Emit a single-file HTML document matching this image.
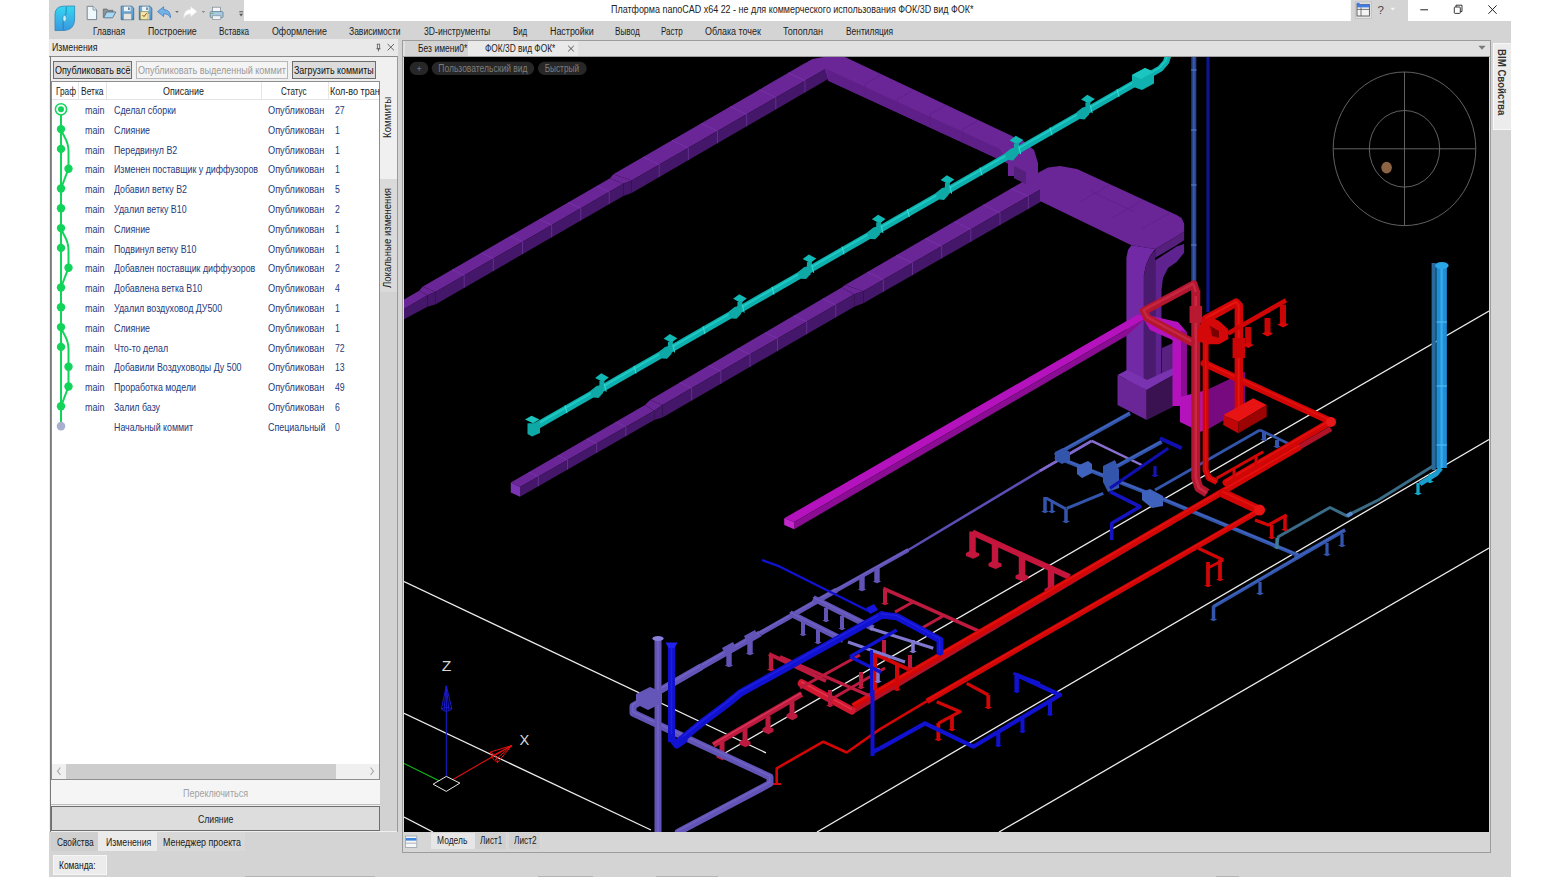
<!DOCTYPE html>
<html lang="ru"><head><meta charset="utf-8"><title>nanoCAD</title>
<style>
html,body{margin:0;padding:0;background:#fff}
body{width:1560px;height:877px;position:relative;overflow:hidden;font-family:"Liberation Sans",sans-serif}
body>div{position:absolute}
body>span{position:absolute;white-space:nowrap;line-height:1;transform-origin:0 0;display:block}
</style></head><body>
<div style="left:49px;top:0px;width:1462px;height:877px;background:#d4d4d4;"></div>
<div style="left:244px;top:0px;width:1107px;height:21px;background:#fff;"></div>
<div style="left:1408px;top:0px;width:103px;height:21px;background:#fff;"></div>
<span style="left:610.80px;top:4.94px;font-size:10px;color:#222;transform:scaleX(0.8946);">Платформа nanoCAD x64 22 - не для коммерческого использования ФОК/3D вид ФОК*</span>
<span style="left:92.50px;top:26.64px;font-size:10px;color:#1c1c1c;transform:scaleX(0.8408);">Главная</span>
<span style="left:147.50px;top:26.64px;font-size:10px;color:#1c1c1c;transform:scaleX(0.8746);">Построение</span>
<span style="left:218.70px;top:26.64px;font-size:10px;color:#1c1c1c;transform:scaleX(0.8099);">Вставка</span>
<span style="left:271.70px;top:26.64px;font-size:10px;color:#1c1c1c;transform:scaleX(0.8829);">Оформление</span>
<span style="left:348.70px;top:26.64px;font-size:10px;color:#1c1c1c;transform:scaleX(0.8503);">Зависимости</span>
<span style="left:424.20px;top:26.64px;font-size:10px;color:#1c1c1c;transform:scaleX(0.8626);">3D-инструменты</span>
<span style="left:513.30px;top:26.64px;font-size:10px;color:#1c1c1c;transform:scaleX(0.7849);">Вид</span>
<span style="left:549.70px;top:26.64px;font-size:10px;color:#1c1c1c;transform:scaleX(0.8892);">Настройки</span>
<span style="left:615.30px;top:26.64px;font-size:10px;color:#1c1c1c;transform:scaleX(0.8170);">Вывод</span>
<span style="left:661.30px;top:26.64px;font-size:10px;color:#1c1c1c;transform:scaleX(0.8025);">Растр</span>
<span style="left:705.00px;top:26.64px;font-size:10px;color:#1c1c1c;transform:scaleX(0.8951);">Облака точек</span>
<span style="left:783.30px;top:26.64px;font-size:10px;color:#1c1c1c;transform:scaleX(0.9050);">Топоплан</span>
<span style="left:846.30px;top:26.64px;font-size:10px;color:#1c1c1c;transform:scaleX(0.8408);">Вентиляция</span>
<div style="left:49px;top:39px;width:349px;height:17px;background:#e9e9e9;"></div>
<span style="left:52.00px;top:43.23px;font-size:10px;color:#1a1a1a;transform:scaleX(0.8781);">Изменения</span>
<div style="left:49px;top:56px;width:349px;height:776px;background:#f0f0f0;"></div>
<div style="left:49px;top:56px;width:349px;height:1px;background:#8a8a8a;"></div>
<div style="left:49.6px;top:56px;width:1px;height:776px;background:#7a7a7a;"></div>
<div style="left:397px;top:56px;width:1px;height:776px;background:#9a9a9a;"></div>
<div style="left:380px;top:57px;width:17px;height:774px;background:#d2d2d2;"></div>
<div style="left:380px;top:57px;width:17px;height:122px;background:#f0f0f0;"></div>
<div style="left:380px;top:179px;width:17px;height:113px;background:#dadada;"></div>
<span style="left:383.14px;top:138.20px;font-size:10px;color:#1a1a1a;transform:rotate(-90deg) scaleX(0.9697);">Коммиты</span>
<span style="left:383.14px;top:288.30px;font-size:10px;color:#1a1a1a;transform:rotate(-90deg) scaleX(0.9552);">Локальные изменения</span>
<div style="left:53px;top:61px;width:77px;height:15.5px;background:#dcdcdc;border:1px solid #6e6e6e"></div>
<span style="left:55.30px;top:65.31px;font-size:10.5px;color:#111;transform:scaleX(0.8568);">Опубликовать всё</span>
<div style="left:136px;top:61px;width:150px;height:15.5px;background:#f4f4f4;border:1px solid #b8b8b8"></div>
<span style="left:138.20px;top:65.31px;font-size:10.5px;color:#9a9a9a;transform:scaleX(0.8611);">Опубликовать выделенный коммит</span>
<div style="left:292px;top:61px;width:82px;height:15.5px;background:#dcdcdc;border:1px solid #6e6e6e"></div>
<span style="left:294.20px;top:65.31px;font-size:10.5px;color:#111;transform:scaleX(0.8462);">Загрузить коммиты</span>
<div style="left:51px;top:81px;width:329px;height:699px;background:#fff;border:1px solid #8e8e8e;box-sizing:border-box;"></div>
<div style="left:52px;top:99px;width:327px;height:1px;background:#e4e4e4;"></div>
<div style="left:78px;top:82px;width:1px;height:17px;background:#e6e6e6;"></div>
<div style="left:106.3px;top:82px;width:1px;height:17px;background:#e6e6e6;"></div>
<div style="left:261.3px;top:82px;width:1px;height:17px;background:#e6e6e6;"></div>
<div style="left:327.5px;top:82px;width:1px;height:17px;background:#e6e6e6;"></div>
<span style="left:55.80px;top:86.11px;font-size:10.5px;color:#1a1a1a;transform:scaleX(0.7869);">Граф</span>
<span style="left:80.80px;top:86.11px;font-size:10.5px;color:#1a1a1a;transform:scaleX(0.8045);">Ветка</span>
<span style="left:163.30px;top:86.11px;font-size:10.5px;color:#1a1a1a;transform:scaleX(0.8466);">Описание</span>
<span style="left:281.40px;top:86.11px;font-size:10.5px;color:#1a1a1a;transform:scaleX(0.7653);">Статус</span>
<span style="left:329.50px;top:86.11px;font-size:10.5px;color:#1a1a1a;transform:scaleX(0.8592);">Кол-во тран</span>
<span style="left:84.70px;top:104.91px;font-size:10.5px;color:#243a7c;transform:scaleX(0.8569);">main</span>
<span style="left:113.70px;top:104.91px;font-size:10.5px;color:#243a7c;transform:scaleX(0.8420);">Сделал сборки</span>
<span style="left:268.00px;top:104.91px;font-size:10.5px;color:#243a7c;transform:scaleX(0.8726);">Опубликован</span>
<span style="left:334.70px;top:104.91px;font-size:10.5px;color:#243a7c;transform:scaleX(0.8300);">27</span>
<span style="left:84.70px;top:124.71px;font-size:10.5px;color:#243a7c;transform:scaleX(0.8569);">main</span>
<span style="left:113.70px;top:124.71px;font-size:10.5px;color:#243a7c;transform:scaleX(0.8420);">Слияние</span>
<span style="left:268.00px;top:124.71px;font-size:10.5px;color:#243a7c;transform:scaleX(0.8726);">Опубликован</span>
<span style="left:334.70px;top:124.71px;font-size:10.5px;color:#243a7c;transform:scaleX(0.8300);">1</span>
<span style="left:84.70px;top:144.51px;font-size:10.5px;color:#243a7c;transform:scaleX(0.8569);">main</span>
<span style="left:113.70px;top:144.51px;font-size:10.5px;color:#243a7c;transform:scaleX(0.8420);">Передвинул В2</span>
<span style="left:268.00px;top:144.51px;font-size:10.5px;color:#243a7c;transform:scaleX(0.8726);">Опубликован</span>
<span style="left:334.70px;top:144.51px;font-size:10.5px;color:#243a7c;transform:scaleX(0.8300);">1</span>
<span style="left:84.70px;top:164.31px;font-size:10.5px;color:#243a7c;transform:scaleX(0.8569);">main</span>
<span style="left:113.70px;top:164.31px;font-size:10.5px;color:#243a7c;transform:scaleX(0.8420);">Изменен поставщик у диффузоров</span>
<span style="left:268.00px;top:164.31px;font-size:10.5px;color:#243a7c;transform:scaleX(0.8726);">Опубликован</span>
<span style="left:334.70px;top:164.31px;font-size:10.5px;color:#243a7c;transform:scaleX(0.8300);">1</span>
<span style="left:84.70px;top:184.11px;font-size:10.5px;color:#243a7c;transform:scaleX(0.8569);">main</span>
<span style="left:113.70px;top:184.11px;font-size:10.5px;color:#243a7c;transform:scaleX(0.8420);">Добавил ветку В2</span>
<span style="left:268.00px;top:184.11px;font-size:10.5px;color:#243a7c;transform:scaleX(0.8726);">Опубликован</span>
<span style="left:334.70px;top:184.11px;font-size:10.5px;color:#243a7c;transform:scaleX(0.8300);">5</span>
<span style="left:84.70px;top:203.91px;font-size:10.5px;color:#243a7c;transform:scaleX(0.8569);">main</span>
<span style="left:113.70px;top:203.91px;font-size:10.5px;color:#243a7c;transform:scaleX(0.8420);">Удалил ветку В10</span>
<span style="left:268.00px;top:203.91px;font-size:10.5px;color:#243a7c;transform:scaleX(0.8726);">Опубликован</span>
<span style="left:334.70px;top:203.91px;font-size:10.5px;color:#243a7c;transform:scaleX(0.8300);">2</span>
<span style="left:84.70px;top:223.71px;font-size:10.5px;color:#243a7c;transform:scaleX(0.8569);">main</span>
<span style="left:113.70px;top:223.71px;font-size:10.5px;color:#243a7c;transform:scaleX(0.8420);">Слияние</span>
<span style="left:268.00px;top:223.71px;font-size:10.5px;color:#243a7c;transform:scaleX(0.8726);">Опубликован</span>
<span style="left:334.70px;top:223.71px;font-size:10.5px;color:#243a7c;transform:scaleX(0.8300);">1</span>
<span style="left:84.70px;top:243.51px;font-size:10.5px;color:#243a7c;transform:scaleX(0.8569);">main</span>
<span style="left:113.70px;top:243.51px;font-size:10.5px;color:#243a7c;transform:scaleX(0.8420);">Подвинул ветку В10</span>
<span style="left:268.00px;top:243.51px;font-size:10.5px;color:#243a7c;transform:scaleX(0.8726);">Опубликован</span>
<span style="left:334.70px;top:243.51px;font-size:10.5px;color:#243a7c;transform:scaleX(0.8300);">1</span>
<span style="left:84.70px;top:263.31px;font-size:10.5px;color:#243a7c;transform:scaleX(0.8569);">main</span>
<span style="left:113.70px;top:263.31px;font-size:10.5px;color:#243a7c;transform:scaleX(0.8420);">Добавлен поставщик диффузоров</span>
<span style="left:268.00px;top:263.31px;font-size:10.5px;color:#243a7c;transform:scaleX(0.8726);">Опубликован</span>
<span style="left:334.70px;top:263.31px;font-size:10.5px;color:#243a7c;transform:scaleX(0.8300);">2</span>
<span style="left:84.70px;top:283.11px;font-size:10.5px;color:#243a7c;transform:scaleX(0.8569);">main</span>
<span style="left:113.70px;top:283.11px;font-size:10.5px;color:#243a7c;transform:scaleX(0.8420);">Добавлена ветка В10</span>
<span style="left:268.00px;top:283.11px;font-size:10.5px;color:#243a7c;transform:scaleX(0.8726);">Опубликован</span>
<span style="left:334.70px;top:283.11px;font-size:10.5px;color:#243a7c;transform:scaleX(0.8300);">4</span>
<span style="left:84.70px;top:302.91px;font-size:10.5px;color:#243a7c;transform:scaleX(0.8569);">main</span>
<span style="left:113.70px;top:302.91px;font-size:10.5px;color:#243a7c;transform:scaleX(0.8420);">Удалил воздуховод ДУ500</span>
<span style="left:268.00px;top:302.91px;font-size:10.5px;color:#243a7c;transform:scaleX(0.8726);">Опубликован</span>
<span style="left:334.70px;top:302.91px;font-size:10.5px;color:#243a7c;transform:scaleX(0.8300);">1</span>
<span style="left:84.70px;top:322.71px;font-size:10.5px;color:#243a7c;transform:scaleX(0.8569);">main</span>
<span style="left:113.70px;top:322.71px;font-size:10.5px;color:#243a7c;transform:scaleX(0.8420);">Слияние</span>
<span style="left:268.00px;top:322.71px;font-size:10.5px;color:#243a7c;transform:scaleX(0.8726);">Опубликован</span>
<span style="left:334.70px;top:322.71px;font-size:10.5px;color:#243a7c;transform:scaleX(0.8300);">1</span>
<span style="left:84.70px;top:342.51px;font-size:10.5px;color:#243a7c;transform:scaleX(0.8569);">main</span>
<span style="left:113.70px;top:342.51px;font-size:10.5px;color:#243a7c;transform:scaleX(0.8420);">Что-то делал</span>
<span style="left:268.00px;top:342.51px;font-size:10.5px;color:#243a7c;transform:scaleX(0.8726);">Опубликован</span>
<span style="left:334.70px;top:342.51px;font-size:10.5px;color:#243a7c;transform:scaleX(0.8300);">72</span>
<span style="left:84.70px;top:362.31px;font-size:10.5px;color:#243a7c;transform:scaleX(0.8569);">main</span>
<span style="left:113.70px;top:362.31px;font-size:10.5px;color:#243a7c;transform:scaleX(0.8420);">Добавили Воздуховоды Ду 500</span>
<span style="left:268.00px;top:362.31px;font-size:10.5px;color:#243a7c;transform:scaleX(0.8726);">Опубликован</span>
<span style="left:334.70px;top:362.31px;font-size:10.5px;color:#243a7c;transform:scaleX(0.8300);">13</span>
<span style="left:84.70px;top:382.11px;font-size:10.5px;color:#243a7c;transform:scaleX(0.8569);">main</span>
<span style="left:113.70px;top:382.11px;font-size:10.5px;color:#243a7c;transform:scaleX(0.8420);">Проработка модели</span>
<span style="left:268.00px;top:382.11px;font-size:10.5px;color:#243a7c;transform:scaleX(0.8726);">Опубликован</span>
<span style="left:334.70px;top:382.11px;font-size:10.5px;color:#243a7c;transform:scaleX(0.8300);">49</span>
<span style="left:84.70px;top:401.91px;font-size:10.5px;color:#243a7c;transform:scaleX(0.8569);">main</span>
<span style="left:113.70px;top:401.91px;font-size:10.5px;color:#243a7c;transform:scaleX(0.8420);">Залил базу</span>
<span style="left:268.00px;top:401.91px;font-size:10.5px;color:#243a7c;transform:scaleX(0.8726);">Опубликован</span>
<span style="left:334.70px;top:401.91px;font-size:10.5px;color:#243a7c;transform:scaleX(0.8300);">6</span>
<span style="left:113.70px;top:421.71px;font-size:10.5px;color:#243a7c;transform:scaleX(0.8420);">Начальный коммит</span>
<span style="left:268.00px;top:421.71px;font-size:10.5px;color:#243a7c;transform:scaleX(0.8502);">Специальный</span>
<span style="left:334.70px;top:421.71px;font-size:10.5px;color:#243a7c;transform:scaleX(0.8300);">0</span>
<svg style="position:absolute;left:51px;top:100px" width="30" height="345" viewBox="51 100 30 345"><path d="M61 109.3 L61 426.1" stroke="#12d45a" stroke-width="2" fill="none"/><path d="M61 129.1 C63 137.1 68.5 139.1 68.5 151.1 L68.5 168.7 L61 188.5" stroke="#12d45a" stroke-width="2" fill="none"/><path d="M61 228.10000000000002 C63 236.10000000000002 68.5 238.10000000000002 68.5 250.10000000000002 L68.5 267.7 L61 287.5" stroke="#12d45a" stroke-width="2" fill="none"/><path d="M61 327.1 C63 335.1 68.5 337.1 68.5 349.1 L68.5 386.5 L61 406.3" stroke="#12d45a" stroke-width="2" fill="none"/><circle cx="61" cy="109.3" r="5.6" fill="#fff" stroke="#12d45a" stroke-width="1.5"/><circle cx="61" cy="109.3" r="3" fill="#12d45a"/><circle cx="61" cy="129.1" r="4.2" fill="#12d45a"/><circle cx="61" cy="148.9" r="4.2" fill="#12d45a"/><circle cx="68.5" cy="168.7" r="4.2" fill="#12d45a"/><circle cx="61" cy="188.5" r="4.2" fill="#12d45a"/><circle cx="61" cy="208.3" r="4.2" fill="#12d45a"/><circle cx="61" cy="228.10000000000002" r="4.2" fill="#12d45a"/><circle cx="61" cy="247.89999999999998" r="4.2" fill="#12d45a"/><circle cx="68.5" cy="267.7" r="4.2" fill="#12d45a"/><circle cx="61" cy="287.5" r="4.2" fill="#12d45a"/><circle cx="61" cy="307.3" r="4.2" fill="#12d45a"/><circle cx="61" cy="327.1" r="4.2" fill="#12d45a"/><circle cx="61" cy="346.90000000000003" r="4.2" fill="#12d45a"/><circle cx="68.5" cy="366.70000000000005" r="4.2" fill="#12d45a"/><circle cx="68.5" cy="386.5" r="4.2" fill="#12d45a"/><circle cx="61" cy="406.3" r="4.2" fill="#12d45a"/><circle cx="61" cy="426.1" r="4.3" fill="#a9b0cf"/></svg>
<div style="left:52px;top:763.5px;width:327px;height:15.5px;background:#f0f0f0;"></div>
<div style="left:65.8px;top:763.5px;width:270.7px;height:15.5px;background:#cdcdcd;"></div>
<svg style="position:absolute;left:52px;top:763px" width="327" height="16" viewBox="52 763 327 16"><path d="M60.5 767.5 L57.5 771.2 L60.5 775" stroke="#a8a8a8" stroke-width="1.1" fill="none"/><path d="M370.5 767.5 L373.5 771.2 L370.5 775" stroke="#a8a8a8" stroke-width="1.1" fill="none"/></svg>
<div style="left:51px;top:780px;width:329px;height:25px;background:#f5f5f5;border-bottom:1px solid #bdbdbd;box-sizing:border-box;"></div>
<span style="left:183.30px;top:787.91px;font-size:10.5px;color:#a2a2a2;transform:scaleX(0.8542);">Переключиться</span>
<div style="left:51px;top:806px;width:327px;height:23px;background:#dddddd;border:1px solid #6e6e6e"></div>
<span style="left:198.00px;top:813.81px;font-size:10.5px;color:#222;transform:scaleX(0.8255);">Слияние</span>
<div style="left:49px;top:832px;width:349px;height:19px;background:#d4d4d4;"></div>
<div style="left:51.3px;top:832px;width:47px;height:18.5px;background:#cfcfcf;"></div>
<div style="left:98.3px;top:832px;width:58.7px;height:18.5px;background:#ebebeb;"></div>
<div style="left:157px;top:832px;width:88px;height:18.5px;background:#d8d8d8;"></div>
<span style="left:56.70px;top:837.11px;font-size:10.5px;color:#1a1a1a;transform:scaleX(0.7938);">Свойства</span>
<span style="left:105.50px;top:837.11px;font-size:10.5px;color:#1a1a1a;transform:scaleX(0.8326);">Изменения</span>
<span style="left:162.50px;top:837.11px;font-size:10.5px;color:#1a1a1a;transform:scaleX(0.8451);">Менеджер проекта</span>
<div style="left:52.5px;top:854.5px;width:54.5px;height:20px;background:#ececec;border:1px solid #f6f6f6;box-sizing:border-box;"></div>
<span style="left:58.70px;top:859.61px;font-size:10.5px;color:#111;transform:scaleX(0.8010);">Команда:</span>
<div style="left:245px;top:876px;width:130px;height:1px;background:#b4b4b4;"></div>
<div style="left:537.5px;top:876px;width:55.0px;height:1px;background:#b4b4b4;"></div>
<div style="left:656px;top:876px;width:61.5px;height:1px;background:#b4b4b4;"></div>
<div style="left:1216px;top:876px;width:23px;height:1px;background:#b4b4b4;"></div>
<div style="left:402px;top:39.5px;width:1089px;height:813px;background:#dcdcdc;border:1px solid #9c9c9c;box-sizing:border-box;"></div>
<div style="left:403px;top:40.5px;width:1087px;height:15px;background:#e0e0e0;"></div>
<div style="left:405px;top:41px;width:63px;height:14.5px;background:#d3d3d3;"></div>
<div style="left:468px;top:41px;width:110px;height:14.5px;background:#e9e9e9;"></div>
<div style="left:403px;top:55.5px;width:1087px;height:1.5px;background:#a0a0a0;"></div>
<span style="left:418.30px;top:43.83px;font-size:10px;color:#1a1a1a;transform:scaleX(0.8505);">Без имени0*</span>
<span style="left:484.70px;top:43.83px;font-size:10px;color:#1a1a1a;transform:scaleX(0.8354);">ФОК/3D вид ФОК*</span>
<svg style="position:absolute;left:404px;top:57px" width="1085" height="775" viewBox="404 57 1085 775"><rect x="404" y="57" width="1085" height="775" fill="#000"/>
<polyline points="725.0,753.0 1489.0,311.0" fill="none" stroke="#ededed" stroke-width="1.3" />
<polyline points="817.0,832.0 1489.0,439.5" fill="none" stroke="#ededed" stroke-width="1.3" />
<polyline points="999.0,832.0 1489.0,548.0" fill="none" stroke="#ededed" stroke-width="1.3" />
<polyline points="404.0,581.6 766.0,752.8" fill="none" stroke="#ededed" stroke-width="1.3" />
<polyline points="404.0,713.3 651.0,830.0" fill="none" stroke="#ededed" stroke-width="1.3" />
<polyline points="404.0,817.0 433.0,832.0" fill="none" stroke="#ededed" stroke-width="1.3" />
<polygon points="829.0,49.2 613.3,174.3 631.7,180.5 829.0,66.9" fill="#6a2597" />
<polygon points="829.0,66.9 631.7,180.5 631.7,193.0 829.0,78.5" fill="#45176a" />
<path d="M788.2 72.8 L805.0 80.7" stroke="#7d3cae" stroke-width="0.8" opacity="0.8"/>
<path d="M805.0 80.7 L805.0 92.4" stroke="#6a3496" stroke-width="0.9" opacity="0.9"/>
<path d="M759.2 89.7 L775.8 97.5" stroke="#7d3cae" stroke-width="0.8" opacity="0.8"/>
<path d="M775.8 97.5 L775.8 109.4" stroke="#6a3496" stroke-width="0.9" opacity="0.9"/>
<path d="M730.2 106.5 L746.7 114.3" stroke="#7d3cae" stroke-width="0.8" opacity="0.8"/>
<path d="M746.7 114.3 L746.7 126.3" stroke="#6a3496" stroke-width="0.9" opacity="0.9"/>
<path d="M701.1 123.4 L717.5 131.1" stroke="#7d3cae" stroke-width="0.8" opacity="0.8"/>
<path d="M717.5 131.1 L717.5 143.2" stroke="#6a3496" stroke-width="0.9" opacity="0.9"/>
<path d="M672.0 140.3 L688.3 147.9" stroke="#7d3cae" stroke-width="0.8" opacity="0.8"/>
<path d="M688.3 147.9 L688.3 160.2" stroke="#6a3496" stroke-width="0.9" opacity="0.9"/>
<path d="M643.0 157.1 L659.2 164.7" stroke="#7d3cae" stroke-width="0.8" opacity="0.8"/>
<path d="M659.2 164.7 L659.2 177.0" stroke="#6a3496" stroke-width="0.9" opacity="0.9"/>
<polygon points="613.3,174.3 610.0,178.3 623.3,183.8 631.7,180.5" fill="#6a2597" />
<polygon points="631.7,180.5 623.3,183.8 623.3,196.0 631.7,193.0" fill="#45176a" />
<polygon points="610.0,178.3 422.5,286.7 435.8,291.7 623.3,183.8" fill="#6a2597" />
<polygon points="623.3,183.8 435.8,291.7 435.8,304.2 623.3,196.0" fill="#45176a" />
<path d="M596.7 186.0 L609.2 191.9" stroke="#7d3cae" stroke-width="0.8" opacity="0.8"/>
<path d="M609.2 191.9 L609.2 204.1" stroke="#6a3496" stroke-width="0.9" opacity="0.9"/>
<path d="M568.3 202.4 L580.8 208.3" stroke="#7d3cae" stroke-width="0.8" opacity="0.8"/>
<path d="M580.8 208.3 L580.8 220.5" stroke="#6a3496" stroke-width="0.9" opacity="0.9"/>
<path d="M539.3 219.2 L551.7 225.0" stroke="#7d3cae" stroke-width="0.8" opacity="0.8"/>
<path d="M551.7 225.0 L551.7 237.3" stroke="#6a3496" stroke-width="0.9" opacity="0.9"/>
<path d="M510.2 236.0 L522.5 241.8" stroke="#7d3cae" stroke-width="0.8" opacity="0.8"/>
<path d="M522.5 241.8 L522.5 254.2" stroke="#6a3496" stroke-width="0.9" opacity="0.9"/>
<path d="M481.1 252.9 L493.3 258.6" stroke="#7d3cae" stroke-width="0.8" opacity="0.8"/>
<path d="M493.3 258.6 L493.3 271.0" stroke="#6a3496" stroke-width="0.9" opacity="0.9"/>
<path d="M452.0 269.6 L464.2 275.4" stroke="#7d3cae" stroke-width="0.8" opacity="0.8"/>
<path d="M464.2 275.4 L464.2 287.8" stroke="#6a3496" stroke-width="0.9" opacity="0.9"/>
<polygon points="422.5,286.7 419.2,290.8 427.5,295.3 435.8,291.7" fill="#6a2597" />
<polygon points="435.8,291.7 427.5,295.3 427.5,306.7 435.8,304.2" fill="#45176a" />
<polygon points="419.2,290.8 404.0,299.6 404.0,308.9 427.5,295.3" fill="#6a2597" />
<polygon points="427.5,295.3 404.0,308.9 404.0,319.3 427.5,306.7" fill="#45176a" />
<polygon points="811.0,57.0 845.0,57.0 1012.0,136.0 1030.0,150.0 1036.0,166.0 1036.0,176.0 1008.0,176.0 1008.0,163.5 828.3,80.8 825.0,69.0" fill="#6a2597" />
<polygon points="800.0,56.0 829.0,56.0 811.5,59.3 806.0,62.4" fill="#000" />
<polygon points="826.7,69.2 1000.0,149.0 1008.0,163.5 828.3,80.8" fill="#5e2088" />
<path d="M880 75.5 L865 84.1 L865 95.5" stroke="#5a1e84" stroke-width="0.8" fill="none" opacity="0.8"/>
<path d="M912.5 90.6 L897.5 99.2 L897.5 110.6" stroke="#5a1e84" stroke-width="0.8" fill="none" opacity="0.8"/>
<path d="M945 105.7 L930 114.3 L930 125.7" stroke="#5a1e84" stroke-width="0.8" fill="none" opacity="0.8"/>
<path d="M977.5 120.8 L962.5 129.4 L962.5 140.8" stroke="#5a1e84" stroke-width="0.8" fill="none" opacity="0.8"/>
<polygon points="1040.0,171.7 845.0,285.0 863.3,291.2 1058.3,179.2" fill="#6a2597" />
<polygon points="1058.3,179.2 863.3,291.2 863.3,303.3 1058.3,191.7" fill="#45176a" />
<path d="M1011.2 188.4 L1028.3 196.4" stroke="#7d3cae" stroke-width="0.8" opacity="0.8"/>
<path d="M1028.3 196.4 L1028.3 208.9" stroke="#6a3496" stroke-width="0.9" opacity="0.9"/>
<path d="M983.1 204.7 L1000.0 212.7" stroke="#7d3cae" stroke-width="0.8" opacity="0.8"/>
<path d="M1000.0 212.7 L1000.0 225.1" stroke="#6a3496" stroke-width="0.9" opacity="0.9"/>
<path d="M954.1 221.6 L970.8 229.5" stroke="#7d3cae" stroke-width="0.8" opacity="0.8"/>
<path d="M970.8 229.5 L970.8 241.8" stroke="#6a3496" stroke-width="0.9" opacity="0.9"/>
<path d="M925.2 238.4 L941.7 246.2" stroke="#7d3cae" stroke-width="0.8" opacity="0.8"/>
<path d="M941.7 246.2 L941.7 258.4" stroke="#6a3496" stroke-width="0.9" opacity="0.9"/>
<path d="M896.2 255.3 L912.5 262.9" stroke="#7d3cae" stroke-width="0.8" opacity="0.8"/>
<path d="M912.5 262.9 L912.5 275.1" stroke="#6a3496" stroke-width="0.9" opacity="0.9"/>
<path d="M867.1 272.1 L883.3 279.7" stroke="#7d3cae" stroke-width="0.8" opacity="0.8"/>
<path d="M883.3 279.7 L883.3 291.9" stroke="#6a3496" stroke-width="0.9" opacity="0.9"/>
<polygon points="845.0,285.0 841.7,287.5 854.2,294.2 863.3,291.2" fill="#6a2597" />
<polygon points="863.3,291.2 854.2,294.2 854.2,306.7 863.3,303.3" fill="#45176a" />
<polygon points="841.7,287.5 650.0,400.0 662.5,405.0 854.2,294.2" fill="#6a2597" />
<polygon points="854.2,294.2 662.5,405.0 662.5,417.5 854.2,306.7" fill="#45176a" />
<path d="M822.6 298.6 L835.8 304.8" stroke="#7d3cae" stroke-width="0.8" opacity="0.8"/>
<path d="M835.8 304.8 L835.8 317.3" stroke="#6a3496" stroke-width="0.9" opacity="0.9"/>
<path d="M793.7 315.6 L806.7 321.7" stroke="#7d3cae" stroke-width="0.8" opacity="0.8"/>
<path d="M806.7 321.7 L806.7 334.2" stroke="#6a3496" stroke-width="0.9" opacity="0.9"/>
<path d="M764.8 332.6 L777.5 338.5" stroke="#7d3cae" stroke-width="0.8" opacity="0.8"/>
<path d="M777.5 338.5 L777.5 351.0" stroke="#6a3496" stroke-width="0.9" opacity="0.9"/>
<path d="M737.5 348.6 L750.0 354.4" stroke="#7d3cae" stroke-width="0.8" opacity="0.8"/>
<path d="M750.0 354.4 L750.0 366.9" stroke="#6a3496" stroke-width="0.9" opacity="0.9"/>
<path d="M708.6 365.6 L720.8 371.3" stroke="#7d3cae" stroke-width="0.8" opacity="0.8"/>
<path d="M720.8 371.3 L720.8 383.8" stroke="#6a3496" stroke-width="0.9" opacity="0.9"/>
<path d="M679.7 382.5 L691.7 388.1" stroke="#7d3cae" stroke-width="0.8" opacity="0.8"/>
<path d="M691.7 388.1 L691.7 400.6" stroke="#6a3496" stroke-width="0.9" opacity="0.9"/>
<polygon points="650.0,400.0 645.0,405.0 654.2,410.8 662.5,405.0" fill="#6a2597" />
<polygon points="662.5,405.0 654.2,410.8 654.2,420.0 662.5,417.5" fill="#45176a" />
<polygon points="645.0,405.0 510.8,482.5 520.0,487.0 654.2,410.8" fill="#6a2597" />
<polygon points="654.2,410.8 520.0,487.0 520.0,496.7 654.2,420.0" fill="#45176a" />
<path d="M615.5 422.1 L625.8 426.9" stroke="#7d3cae" stroke-width="0.8" opacity="0.8"/>
<path d="M625.8 426.9 L625.8 436.2" stroke="#6a3496" stroke-width="0.9" opacity="0.9"/>
<path d="M586.6 438.7 L596.7 443.4" stroke="#7d3cae" stroke-width="0.8" opacity="0.8"/>
<path d="M596.7 443.4 L596.7 452.9" stroke="#6a3496" stroke-width="0.9" opacity="0.9"/>
<path d="M557.7 455.4 L567.5 460.0" stroke="#7d3cae" stroke-width="0.8" opacity="0.8"/>
<path d="M567.5 460.0 L567.5 469.6" stroke="#6a3496" stroke-width="0.9" opacity="0.9"/>
<path d="M528.8 472.1 L538.3 476.6" stroke="#7d3cae" stroke-width="0.8" opacity="0.8"/>
<path d="M538.3 476.6 L538.3 486.2" stroke="#6a3496" stroke-width="0.9" opacity="0.9"/>
<polygon points="510.8,482.5 520.0,487.0 520.0,496.7 510.8,492.5" fill="#7b34b3" />
<polygon points="1040.0,171.7 1048.0,167.5 1060.0,166.0 1077.0,169.0 1176.6,215.1 1181.5,218.0 1184.1,223.5 1184.1,231.4 1176.6,236.4 1155.2,249.0 1131.4,245.2 1040.0,201.0" fill="#6a2597" />
<polygon points="1131.4,245.2 1155.2,249.0 1150.0,256.0 1146.0,265.0 1143.9,275.0 1143.9,392.0 1126.4,382.0 1126.4,258.0 1128.0,250.0" fill="#7229a6" />
<polygon points="1155.2,249.0 1176.6,236.4 1184.1,231.4 1184.1,240.2 1176.6,245.2 1155.2,257.8" fill="#55207c" />
<polygon points="1143.9,275.0 1146.0,265.0 1150.0,256.0 1155.2,250.0 1155.2,384.0 1143.9,392.0" fill="#4a1a6e" />
<polygon points="1155.2,260.3 1176.6,246.5 1184.1,244.0 1184.1,252.7 1176.6,262.0 1168.0,268.0 1163.0,278.0 1161.5,290.0 1161.5,380.0 1155.2,384.0" fill="#5f2390" />
<path d="M1110 184.5 L1080 202" stroke="#5c1f86" stroke-width="0.8" opacity="0.7"/>
<path d="M1143 200 L1113 217.5" stroke="#5c1f86" stroke-width="0.8" opacity="0.7"/>
<path d="M1170 213 L1142 229" stroke="#5c1f86" stroke-width="0.8" opacity="0.7"/>
<path d="M1090 191 L1135 212" stroke="#5c1f86" stroke-width="0.8" opacity="0.7"/>
<polygon points="1162.0,348.0 1173.0,343.0 1173.0,376.0 1162.0,380.0" fill="#58207f" />
<polygon points="1117.5,375.0 1127.0,370.0 1147.0,380.0 1173.3,368.0 1173.3,375.0 1146.7,390.0" fill="#7a33b0" />
<polygon points="1117.5,375.0 1146.7,390.0 1146.7,420.0 1117.5,405.0" fill="#6a2597" />
<polygon points="1146.7,390.0 1173.3,375.0 1173.3,406.7 1146.7,420.0" fill="#3a1252" />
<polygon points="1010.0,137.0 1022.0,140.0 1034.0,150.0 1038.0,163.0 1038.0,178.0 1026.0,184.0 1014.0,178.0 1014.0,166.0 1008.0,163.5" fill="#6a2597" />
<polygon points="1014.0,166.0 1026.0,172.0 1026.0,184.0 1014.0,178.0" fill="#55207c" />
<polygon points="784.2,518.3 1138.3,314.2 1146.0,318.0 794.2,522.0" fill="#b412bd" />
<polygon points="794.2,522.0 1146.0,318.0 1126.7,335.8 794.2,529.2" fill="#8a0d94" />
<polygon points="784.2,518.3 794.2,522.0 794.2,529.2 784.2,525.0" fill="#c428cc" />
<polygon points="1140.0,313.0 1160.0,318.0 1178.0,322.0 1186.7,332.0 1186.7,406.0 1172.5,406.0 1172.5,340.0 1150.0,330.0" fill="#b412bd" />
<polygon points="1181.0,330.0 1186.7,332.0 1186.7,406.0 1181.0,406.0" fill="#8a0d94" />
<polygon points="1180.0,397.0 1206.7,390.0 1206.7,430.0 1200.0,431.7 1180.0,422.0" fill="#b412bd" />
<polygon points="1206.7,390.0 1245.0,371.7 1245.0,408.0 1206.7,430.0" fill="#760a7e" />
<polyline points="1193.8,57.0 1193.8,284.0" fill="none" stroke="#27438e" stroke-width="5" stroke-linejoin="round" stroke-linecap="butt"/>
<polyline points="1193.8,57.0 1193.8,284.0" fill="none" stroke="#3c5eb2" stroke-width="1.6" stroke-linejoin="round" stroke-linecap="butt" opacity="0.85"/>
<polyline points="1191.0,70.0 1196.6,70.0" fill="none" stroke="#5a80d0" stroke-width="1" />
<polyline points="1191.0,130.0 1196.6,130.0" fill="none" stroke="#5a80d0" stroke-width="1" />
<polyline points="1191.0,185.0 1196.6,185.0" fill="none" stroke="#5a80d0" stroke-width="1" />
<polyline points="1191.0,245.0 1196.6,245.0" fill="none" stroke="#5a80d0" stroke-width="1" />
<polyline points="1208.0,57.0 1208.0,312.0" fill="none" stroke="#0c1590" stroke-width="3.2" stroke-linejoin="round" stroke-linecap="butt"/>
<polyline points="538.0,425.2 1150.0,74.5" fill="none" stroke="#0db0ae" stroke-width="7.1" stroke-linejoin="round" stroke-linecap="butt"/>
<polyline points="537.6,423.9 1149.6,73.3" fill="none" stroke="#25cfc8" stroke-width="1.8" stroke-linejoin="round" stroke-linecap="butt" opacity="0.85"/>
<polyline points="1150.0,74.5 1160.0,68.8 1166.0,62.0 1168.0,56.0" fill="none" stroke="#0db0ae" stroke-width="6.4" stroke-linejoin="round" stroke-linecap="butt"/>
<polyline points="1149.7,73.4 1159.7,67.6 1165.7,60.8 1167.7,54.8" fill="none" stroke="#25cfc8" stroke-width="1.4" stroke-linejoin="round" stroke-linecap="butt" opacity="0.85"/>
<polygon points="595.1,377.9 601.3,373.3 608.8,377.5 603.0,382.0" fill="#12b8b4" />
<polygon points="599.4,381.1 604.4,380.1 604.4,387.1 599.4,388.1" fill="#0ea8a6" />
<polygon points="590.9,390.6 596.5,386.1 603.0,384.5 603.0,393.1 598.5,397.9 594.0,397.6 590.9,395.1" fill="#0ea8a6" />
<polyline points="604.2,383.7 606.2,391.7" fill="none" stroke="#3adad2" stroke-width="1" />
<polygon points="663.6,338.7 669.8,334.1 677.3,338.3 671.5,342.8" fill="#12b8b4" />
<polygon points="667.9,341.9 672.9,340.9 672.9,347.9 667.9,348.9" fill="#0ea8a6" />
<polygon points="659.4,351.4 665.0,346.9 671.5,345.3 671.5,353.9 667.0,358.7 662.5,358.4 659.4,355.9" fill="#0ea8a6" />
<polyline points="672.7,344.5 674.7,352.5" fill="none" stroke="#3adad2" stroke-width="1" />
<polygon points="733.1,298.8 739.3,294.2 746.8,298.4 741.0,302.9" fill="#12b8b4" />
<polygon points="737.4,302.0 742.4,301.0 742.4,308.0 737.4,309.0" fill="#0ea8a6" />
<polygon points="728.9,311.5 734.5,307.0 741.0,305.4 741.0,314.0 736.5,318.8 732.0,318.5 728.9,316.0" fill="#0ea8a6" />
<polyline points="742.2,304.6 744.2,312.6" fill="none" stroke="#3adad2" stroke-width="1" />
<polygon points="802.6,259.0 808.8,254.4 816.3,258.6 810.5,263.1" fill="#12b8b4" />
<polygon points="806.9,262.2 811.9,261.2 811.9,268.2 806.9,269.2" fill="#0ea8a6" />
<polygon points="798.4,271.7 804.0,267.2 810.5,265.6 810.5,274.2 806.0,279.0 801.5,278.7 798.4,276.2" fill="#0ea8a6" />
<polyline points="811.7,264.8 813.7,272.8" fill="none" stroke="#3adad2" stroke-width="1" />
<polygon points="871.9,219.3 878.1,214.7 885.6,218.9 879.8,223.4" fill="#12b8b4" />
<polygon points="876.2,222.5 881.2,221.5 881.2,228.5 876.2,229.5" fill="#0ea8a6" />
<polygon points="867.7,232.0 873.3,227.5 879.8,225.9 879.8,234.5 875.3,239.3 870.8,239.0 867.7,236.5" fill="#0ea8a6" />
<polyline points="881.0,225.1 883.0,233.1" fill="none" stroke="#3adad2" stroke-width="1" />
<polygon points="940.6,179.9 946.8,175.3 954.3,179.5 948.5,184.0" fill="#12b8b4" />
<polygon points="944.9,183.1 949.9,182.1 949.9,189.1 944.9,190.1" fill="#0ea8a6" />
<polygon points="936.4,192.6 942.0,188.1 948.5,186.5 948.5,195.1 944.0,199.9 939.5,199.6 936.4,197.1" fill="#0ea8a6" />
<polyline points="949.7,185.7 951.7,193.7" fill="none" stroke="#3adad2" stroke-width="1" />
<polygon points="1009.6,140.4 1015.8,135.8 1023.3,140.0 1017.5,144.5" fill="#12b8b4" />
<polygon points="1013.9,143.6 1018.9,142.6 1018.9,149.6 1013.9,150.6" fill="#0ea8a6" />
<polygon points="1005.4,153.1 1011.0,148.6 1017.5,147.0 1017.5,155.6 1013.0,160.4 1008.5,160.1 1005.4,157.6" fill="#0ea8a6" />
<polyline points="1018.7,146.2 1020.7,154.2" fill="none" stroke="#3adad2" stroke-width="1" />
<polygon points="1081.1,99.4 1087.3,94.8 1094.8,99.0 1089.0,103.5" fill="#12b8b4" />
<polygon points="1085.4,102.6 1090.4,101.6 1090.4,108.6 1085.4,109.6" fill="#0ea8a6" />
<polygon points="1076.9,112.1 1082.5,107.6 1089.0,106.0 1089.0,114.6 1084.5,119.4 1080.0,119.1 1076.9,116.6" fill="#0ea8a6" />
<polyline points="1090.2,105.2 1092.2,113.2" fill="none" stroke="#3adad2" stroke-width="1" />
<polyline points="565.0,405.4 567.0,413.2" fill="none" stroke="#40e0d8" stroke-width="1" />
<polyline points="634.0,365.8 636.0,373.6" fill="none" stroke="#40e0d8" stroke-width="1" />
<polyline points="703.0,326.3 705.0,334.1" fill="none" stroke="#40e0d8" stroke-width="1" />
<polyline points="772.0,286.8 774.0,294.6" fill="none" stroke="#40e0d8" stroke-width="1" />
<polyline points="842.0,246.6 844.0,254.4" fill="none" stroke="#40e0d8" stroke-width="1" />
<polyline points="907.3,209.2 909.3,217.0" fill="none" stroke="#40e0d8" stroke-width="1" />
<polyline points="980.0,167.6 982.0,175.4" fill="none" stroke="#40e0d8" stroke-width="1" />
<polyline points="1050.0,127.5 1052.0,135.3" fill="none" stroke="#40e0d8" stroke-width="1" />
<polyline points="1117.0,89.1 1119.0,96.9" fill="none" stroke="#40e0d8" stroke-width="1" />
<polygon points="525.0,419.5 531.5,415.8 539.5,419.5 533.0,423.3" fill="#1cc4be" />
<polygon points="527.5,423.3 533.0,423.3 540.0,420.5 540.0,433.0 532.0,436.5 527.5,434.0" fill="#0ea8a6" />
<polygon points="1132.0,75.0 1145.0,68.0 1154.0,72.0 1154.0,83.5 1142.0,90.0 1132.0,86.5" fill="#0fb2ae" />
<polygon points="1132.0,75.0 1145.0,68.0 1154.0,72.0 1141.0,79.0" fill="#1cc6c0" />
<polyline points="780.0,623.3 908.3,550.0 1040.0,470.8 1091.7,440.8" fill="none" stroke="#5a4eb4" stroke-width="2.6" stroke-linejoin="round" stroke-linecap="butt"/>
<polyline points="1091.7,440.8 1141.7,465.0" fill="none" stroke="#8a70d0" stroke-width="2.4" stroke-linejoin="round" stroke-linecap="butt"/>
<polyline points="1040.0,470.8 1091.7,440.8" fill="none" stroke="#8068cc" stroke-width="2.6" stroke-linejoin="round" stroke-linecap="butt"/>
<polyline points="1130.0,413.3 1055.0,455.0" fill="none" stroke="#3355ac" stroke-width="4" stroke-linejoin="round" stroke-linecap="butt"/>
<polyline points="1129.8,412.6 1054.8,454.3" fill="none" stroke="#4a70c8" stroke-width="1" stroke-linejoin="round" stroke-linecap="butt" opacity="0.85"/>
<polyline points="1055.0,456.7 1156.7,496.7 1300.0,556.0 1295.0,558.3" fill="none" stroke="#3355ac" stroke-width="4" stroke-linejoin="round" stroke-linecap="butt"/>
<polyline points="1054.8,456.0 1156.5,496.0 1299.8,555.3 1294.8,557.6" fill="none" stroke="#4a70c8" stroke-width="1" stroke-linejoin="round" stroke-linecap="butt" opacity="0.85"/>
<polyline points="1161.7,441.7 1113.3,468.3" fill="none" stroke="#3355ac" stroke-width="4" stroke-linejoin="round" stroke-linecap="butt"/>
<polyline points="1161.5,441.0 1113.1,467.6" fill="none" stroke="#4a70c8" stroke-width="1" stroke-linejoin="round" stroke-linecap="butt" opacity="0.85"/>
<polyline points="1103.3,493.3 1066.7,508.3" fill="none" stroke="#3355ac" stroke-width="3" stroke-linejoin="round" stroke-linecap="butt"/>
<polyline points="1260.0,430.0 1155.0,490.0" fill="none" stroke="#3355ac" stroke-width="2.8" stroke-linejoin="round" stroke-linecap="butt"/>
<polyline points="1260.0,430.0 1295.0,446.7" fill="none" stroke="#3355ac" stroke-width="2.8" stroke-linejoin="round" stroke-linecap="butt"/>
<polyline points="1264.0,432.0 1264.0,440.0" fill="none" stroke="#3355ac" stroke-width="4.050000000000001" />
<polygon points="1260.2,439.4 1264.0,438.0 1267.8,439.4 1264.0,441.2" fill="#3355ac" />
<polyline points="1277.0,440.0 1277.0,447.0" fill="none" stroke="#3355ac" stroke-width="4.050000000000001" />
<polygon points="1273.2,446.4 1277.0,445.0 1280.8,446.4 1277.0,448.2" fill="#3355ac" />
<polyline points="1045.0,497.0 1045.0,512.0" fill="none" stroke="#3355ac" stroke-width="3.5100000000000002" />
<polygon points="1041.2,511.4 1045.0,510.0 1048.8,511.4 1045.0,513.2" fill="#3355ac" />
<polyline points="1066.0,509.0 1066.0,522.0" fill="none" stroke="#3355ac" stroke-width="3.5100000000000002" />
<polygon points="1062.2,521.4 1066.0,520.0 1069.8,521.4 1066.0,523.2" fill="#3355ac" />
<polyline points="1052.0,500.0 1052.0,512.0" fill="none" stroke="#3355ac" stroke-width="2.7" />
<polygon points="1048.2,511.4 1052.0,510.0 1055.8,511.4 1052.0,513.2" fill="#3355ac" />
<polyline points="1046.0,498.0 1066.0,509.0" fill="none" stroke="#3355ac" stroke-width="3" stroke-linejoin="round" stroke-linecap="butt"/>
<polygon points="1055.0,452.0 1063.0,448.0 1070.0,452.0 1070.0,460.0 1062.0,464.0 1055.0,460.0" fill="#3355ac" />
<polygon points="1077.0,466.0 1088.0,461.0 1092.0,464.0 1092.0,473.0 1082.0,478.0 1077.0,474.0" fill="#3f63bc" />
<polygon points="1103.0,466.0 1115.0,460.0 1119.0,470.0 1119.0,488.0 1108.0,492.0 1103.0,482.0" fill="#3355ac" />
<polygon points="1142.0,492.0 1150.0,489.0 1163.0,496.0 1163.0,506.0 1152.0,508.0 1142.0,500.0" fill="#3f63bc" />
<polyline points="1295.0,558.3 1345.0,530.0" fill="none" stroke="#3355ac" stroke-width="3.6" stroke-linejoin="round" stroke-linecap="butt"/>
<polyline points="1345.0,530.0 1213.3,606.7" fill="none" stroke="#3355ac" stroke-width="3.6" stroke-linejoin="round" stroke-linecap="butt"/>
<polyline points="1344.8,529.4 1213.1,606.1" fill="none" stroke="#4a70c8" stroke-width="0.9" stroke-linejoin="round" stroke-linecap="butt" opacity="0.85"/>
<polyline points="1213.5,606.0 1213.5,620.0" fill="none" stroke="#3355ac" stroke-width="3.5100000000000002" />
<polygon points="1209.8,619.4 1213.5,618.0 1217.2,619.4 1213.5,621.2" fill="#3355ac" />
<polyline points="1260.0,582.0 1260.0,594.0" fill="none" stroke="#3355ac" stroke-width="3.24" />
<polygon points="1256.2,593.4 1260.0,592.0 1263.8,593.4 1260.0,595.2" fill="#3355ac" />
<polyline points="1327.0,543.0 1327.0,555.0" fill="none" stroke="#3355ac" stroke-width="3.24" />
<polygon points="1323.2,554.4 1327.0,553.0 1330.8,554.4 1327.0,556.2" fill="#3355ac" />
<polyline points="1342.0,534.0 1342.0,546.0" fill="none" stroke="#3355ac" stroke-width="3.24" />
<polygon points="1338.2,545.4 1342.0,544.0 1345.8,545.4 1342.0,547.2" fill="#3355ac" />
<polyline points="1160.0,438.3 1181.7,448.3" fill="none" stroke="#1010b0" stroke-width="4" stroke-linejoin="round" stroke-linecap="butt"/>
<polyline points="1168.3,448.3 1110.0,488.3" fill="none" stroke="#1010b0" stroke-width="3.2" stroke-linejoin="round" stroke-linecap="butt"/>
<polyline points="1110.0,491.7 1140.0,506.7 1111.7,523.3 1111.7,540.0" fill="none" stroke="#1414c0" stroke-width="3.6" stroke-linejoin="round" stroke-linecap="butt"/>
<polyline points="1155.0,466.0 1155.0,476.0" fill="none" stroke="#1414b0" stroke-width="3.24" />
<polygon points="1151.2,475.4 1155.0,474.0 1158.8,475.4 1155.0,477.2" fill="#1414b0" />
<polyline points="1276.7,545.0 1278.3,536.7 1330.0,507.5 1346.7,515.8 1378.3,500.0 1433.0,466.0" fill="none" stroke="#3a6c88" stroke-width="3" stroke-linejoin="round" stroke-linecap="butt"/>
<polyline points="1277.0,538.0 1277.0,548.0" fill="none" stroke="#3f7a96" stroke-width="3.24" />
<polygon points="1273.2,547.4 1277.0,546.0 1280.8,547.4 1277.0,549.2" fill="#3f7a96" />
<polyline points="1347.0,516.0 1352.0,513.0" fill="none" stroke="#5a8ad0" stroke-width="4" stroke-linejoin="round" stroke-linecap="butt"/>
<polyline points="1433.7,263.0 1433.7,470.0" fill="none" stroke="#2a6a9a" stroke-width="4.2" stroke-linejoin="round" stroke-linecap="butt"/>
<polyline points="1441.6,266.0 1441.6,468.0" fill="none" stroke="#1e8fd6" stroke-width="10.5" stroke-linejoin="round" stroke-linecap="butt"/>
<polyline points="1441.6,266.0 1441.6,468.0" fill="none" stroke="#40b0f0" stroke-width="2.2" stroke-linejoin="round" stroke-linecap="butt" opacity="0.85"/>
<ellipse cx="1441.8" cy="265.5" rx="6.8" ry="3.6" fill="#2aa6e8"/>
<polyline points="1436.5,322.0 1447.0,322.0" fill="none" stroke="#58c0f8" stroke-width="1" />
<polyline points="1436.5,386.0 1447.0,386.0" fill="none" stroke="#58c0f8" stroke-width="1" />
<polyline points="1436.5,445.0 1447.0,445.0" fill="none" stroke="#58c0f8" stroke-width="1" />
<polyline points="1441.0,468.0 1436.0,474.0 1420.0,484.0" fill="none" stroke="#1a9cd0" stroke-width="5" stroke-linejoin="round" stroke-linecap="butt"/>
<polyline points="1418.0,483.0 1418.0,494.0" fill="none" stroke="#14a8c8" stroke-width="3.24" />
<polygon points="1414.2,493.4 1418.0,492.0 1421.8,493.4 1418.0,495.2" fill="#14a8c8" />
<polyline points="1430.0,474.0 1430.0,482.0" fill="none" stroke="#14a8c8" stroke-width="2.7" />
<polygon points="1426.2,481.4 1430.0,480.0 1433.8,481.4 1430.0,483.2" fill="#14a8c8" />
<polyline points="1204.0,363.3 1331.0,421.5 1226.0,482.5" fill="none" stroke="#d20606" stroke-width="7" stroke-linejoin="round" stroke-linecap="round"/>
<polyline points="1203.6,362.0 1330.6,420.2 1225.6,481.2" fill="none" stroke="#e41410" stroke-width="1.6" stroke-linejoin="round" stroke-linecap="round" opacity="0.85"/>
<circle cx="1331" cy="422" r="5" fill="#e81818"/>
<polyline points="972.5,532.5 1069.6,577.0" fill="none" stroke="#c4163c" stroke-width="5.8" stroke-linejoin="round" stroke-linecap="butt"/>
<polyline points="972.5,531.5 972.5,553.5" fill="none" stroke="#c4163c" stroke-width="6.5" />
<polygon points="966.0,552.9 971.2,550.3 979.0,553.3 979.0,556.1 973.1,558.7 966.0,555.9" fill="#c4163c" />
<polyline points="995.0,541.8 995.0,563.8" fill="none" stroke="#c4163c" stroke-width="6.5" />
<polygon points="988.5,563.2 993.7,560.6 1001.5,563.6 1001.5,566.4 995.6,569.0 988.5,566.2" fill="#c4163c" />
<polyline points="1022.0,554.2 1022.0,576.2" fill="none" stroke="#c4163c" stroke-width="6.5" />
<polygon points="1015.5,575.6 1020.7,573.0 1028.5,576.0 1028.5,578.8 1022.6,581.4 1015.5,578.6" fill="#c4163c" />
<polyline points="1051.0,567.5 1051.0,589.5" fill="none" stroke="#c4163c" stroke-width="6.5" />
<polygon points="1044.5,588.9 1049.7,586.3 1057.5,589.3 1057.5,592.1 1051.7,594.7 1044.5,591.9" fill="#c4163c" />
<polyline points="883.3,588.3 980.0,631.7" fill="none" stroke="#bc1a3e" stroke-width="3.6" stroke-linejoin="round" stroke-linecap="butt"/>
<polyline points="885.0,589.0 885.0,604.0" fill="none" stroke="#bc1a3e" stroke-width="4.050000000000001" />
<polygon points="881.2,603.4 885.0,602.0 888.8,603.4 885.0,605.2" fill="#bc1a3e" />
<polyline points="913.0,602.0 895.0,612.0" fill="none" stroke="#bc1a3e" stroke-width="3" stroke-linejoin="round" stroke-linecap="butt"/>
<polyline points="943.0,616.0 922.0,628.0" fill="none" stroke="#bc1a3e" stroke-width="3" stroke-linejoin="round" stroke-linecap="butt"/>
<polyline points="1331.0,428.7 1226.0,489.5 870.0,700.8 853.0,711.0" fill="none" stroke="#b21228" stroke-width="5.2" stroke-linejoin="round" stroke-linecap="butt"/>
<polyline points="1300.0,446.7 1111.7,556.0 870.0,696.3 853.0,706.2" fill="none" stroke="#d20606" stroke-width="6.5" stroke-linejoin="round" stroke-linecap="butt"/>
<polyline points="1299.6,445.5 1111.3,554.8 869.6,695.1 852.6,705.0" fill="none" stroke="#e41410" stroke-width="1.6" stroke-linejoin="round" stroke-linecap="butt" opacity="0.85"/>
<polyline points="1195.8,290.0 1195.8,478.0 1199.0,488.0 1207.0,493.0" fill="none" stroke="#b41630" stroke-width="9" stroke-linejoin="round" stroke-linecap="butt"/>
<polyline points="1195.8,290.0 1195.8,478.0 1199.0,488.0 1207.0,493.0" fill="none" stroke="#cc2c46" stroke-width="2.6" stroke-linejoin="round" stroke-linecap="butt" opacity="0.85"/>
<polyline points="1195.8,306.0 1195.8,323.0" fill="none" stroke="#b81830" stroke-width="12.5" stroke-linejoin="round" stroke-linecap="butt"/>
<polyline points="1205.6,320.0 1205.6,470.0 1209.0,478.0 1217.0,482.0" fill="none" stroke="#d20606" stroke-width="6" stroke-linejoin="round" stroke-linecap="butt"/>
<polyline points="1205.6,320.0 1205.6,470.0 1209.0,478.0 1217.0,482.0" fill="none" stroke="#e41410" stroke-width="1.4" stroke-linejoin="round" stroke-linecap="butt" opacity="0.85"/>
<polyline points="1195.8,292.0 1193.5,284.5 1144.0,311.0 1147.5,318.0 1190.8,341.7" fill="none" stroke="#b41630" stroke-width="8.2" stroke-linejoin="round" stroke-linecap="round"/>
<polyline points="1195.5,291.1 1193.2,283.6 1143.7,310.1 1147.2,317.1 1190.5,340.8" fill="none" stroke="#c82a44" stroke-width="2.4" stroke-linejoin="round" stroke-linecap="round" opacity="0.85"/>
<polyline points="1206.0,319.0 1236.0,302.6 1238.8,305.5 1238.8,413.0" fill="none" stroke="#d20606" stroke-width="8.4" stroke-linejoin="round" stroke-linecap="round"/>
<polyline points="1205.8,318.2 1235.8,301.8 1238.6,304.7 1238.6,412.2" fill="none" stroke="#e81a14" stroke-width="2" stroke-linejoin="round" stroke-linecap="round" opacity="0.85"/>
<polyline points="1238.8,338.0 1238.8,358.0" fill="none" stroke="#cc0606" stroke-width="12.5" stroke-linejoin="round" stroke-linecap="butt"/>
<polygon points="1197.5,331.0 1202.0,320.0 1210.0,316.5 1219.0,321.0 1228.0,329.0 1228.4,339.0 1219.0,344.3 1206.0,344.3 1197.5,341.0" fill="#d40808" />
<polygon points="1210.0,326.0 1219.0,331.0 1219.0,338.0 1212.0,336.0" fill="#7a0000" />
<polyline points="1228.0,333.6 1286.0,300.2" fill="none" stroke="#d00606" stroke-width="4.6" stroke-linejoin="round" stroke-linecap="butt"/>
<polyline points="1248.2,327.0 1248.2,346.0" fill="none" stroke="#c80404" stroke-width="6" />
<polygon points="1242.6,345.0 1248.2,342.6 1253.8,345.0 1248.2,348.0" fill="#d80808" />
<polyline points="1267.5,318.0 1267.5,334.6" fill="none" stroke="#c80404" stroke-width="6" />
<polygon points="1261.9,333.6 1267.5,331.2 1273.1,333.6 1267.5,336.6" fill="#d80808" />
<polyline points="1283.0,304.7 1283.0,325.4" fill="none" stroke="#c80404" stroke-width="6" />
<polygon points="1277.4,324.4 1283.0,322.0 1288.6,324.4 1283.0,327.4" fill="#d80808" />
<polygon points="1223.3,415.0 1253.3,398.3 1266.7,405.0 1238.3,422.0" fill="#e81414" />
<polygon points="1223.3,415.0 1238.3,422.0 1238.3,433.3 1223.3,425.0" fill="#c00606" />
<polygon points="1238.3,422.0 1266.7,405.0 1266.7,416.7 1238.3,433.3" fill="#9c0404" />
<polyline points="1223.3,493.3 1258.0,509.5" fill="none" stroke="#d20606" stroke-width="9" stroke-linejoin="round" stroke-linecap="round"/>
<polyline points="1222.8,491.7 1257.5,507.9" fill="none" stroke="#e41410" stroke-width="1.8" stroke-linejoin="round" stroke-linecap="round" opacity="0.85"/>
<polyline points="1261.0,509.5 1181.7,555.1 1046.7,632.5 927.0,701.2" fill="none" stroke="#d20606" stroke-width="5.6" stroke-linejoin="round" stroke-linecap="butt"/>
<polyline points="1260.7,508.5 1181.4,554.1 1046.4,631.5 926.7,700.2" fill="none" stroke="#e41410" stroke-width="1.2" stroke-linejoin="round" stroke-linecap="butt" opacity="0.85"/>
<polyline points="927.0,701.2 880.0,729.1 846.7,752.5 823.3,741.7 776.7,768.3 776.7,784.0" fill="none" stroke="#d20606" stroke-width="2.6" stroke-linejoin="round" stroke-linecap="butt"/>
<polyline points="772.5,784.0 781.0,784.0" fill="none" stroke="#d20606" stroke-width="2" />
<circle cx="1259.5" cy="510" r="5.5" fill="#e81414"/>
<polyline points="1216.7,478.3 1263.3,451.7" fill="none" stroke="#d20606" stroke-width="3" stroke-linejoin="round" stroke-linecap="butt"/>
<polyline points="1234.0,468.0 1234.0,480.0" fill="none" stroke="#d20606" stroke-width="2.9700000000000006" />
<polygon points="1230.2,479.4 1234.0,478.0 1237.8,479.4 1234.0,481.2" fill="#d20606" />
<polyline points="1256.0,455.0 1256.0,467.0" fill="none" stroke="#d20606" stroke-width="2.9700000000000006" />
<polygon points="1252.2,466.4 1256.0,465.0 1259.8,466.4 1256.0,468.2" fill="#d20606" />
<polyline points="1255.0,520.0 1268.3,525.0 1286.7,515.0" fill="none" stroke="#d20606" stroke-width="3.2" stroke-linejoin="round" stroke-linecap="butt"/>
<polyline points="1271.7,525.0 1271.7,538.0" fill="none" stroke="#d20606" stroke-width="3.5100000000000002" />
<polygon points="1268.0,537.4 1271.7,536.0 1275.5,537.4 1271.7,539.2" fill="#d20606" />
<polyline points="1285.0,515.0 1285.0,530.0" fill="none" stroke="#d20606" stroke-width="3.5100000000000002" />
<polygon points="1281.2,529.4 1285.0,528.0 1288.8,529.4 1285.0,531.2" fill="#d20606" />
<polyline points="1198.3,548.3 1223.3,560.0" fill="none" stroke="#d20606" stroke-width="3.2" stroke-linejoin="round" stroke-linecap="butt"/>
<polyline points="1208.0,562.0 1208.0,586.0" fill="none" stroke="#d20606" stroke-width="3.78" />
<polygon points="1204.2,585.4 1208.0,584.0 1211.8,585.4 1208.0,587.2" fill="#d20606" />
<polyline points="1220.0,560.0 1220.0,580.0" fill="none" stroke="#d20606" stroke-width="3.78" />
<polygon points="1216.2,579.4 1220.0,578.0 1223.8,579.4 1220.0,581.2" fill="#d20606" />
<polyline points="1223.3,560.0 1208.0,568.0" fill="none" stroke="#d20606" stroke-width="3" stroke-linejoin="round" stroke-linecap="butt"/>
<polyline points="966.7,683.3 988.3,695.0" fill="none" stroke="#d20606" stroke-width="3.2" stroke-linejoin="round" stroke-linecap="butt"/>
<polyline points="988.3,695.0 988.3,708.0" fill="none" stroke="#d20606" stroke-width="3.78" />
<polygon points="984.5,707.4 988.3,706.0 992.0,707.4 988.3,709.2" fill="#d20606" />
<polyline points="936.7,701.7 960.0,711.7 938.3,723.3" fill="none" stroke="#d20606" stroke-width="3.2" stroke-linejoin="round" stroke-linecap="butt"/>
<polyline points="938.3,723.0 938.3,740.0" fill="none" stroke="#d20606" stroke-width="3.78" />
<polygon points="934.5,739.4 938.3,738.0 942.0,739.4 938.3,741.2" fill="#d20606" />
<polyline points="952.0,716.0 952.0,730.0" fill="none" stroke="#d20606" stroke-width="3.78" />
<polygon points="948.2,729.4 952.0,728.0 955.8,729.4 952.0,731.2" fill="#d20606" />
<polyline points="801.7,683.3 851.7,710.5" fill="none" stroke="#d01830" stroke-width="8" stroke-linejoin="round" stroke-linecap="round"/>
<polyline points="801.3,681.9 851.3,709.1" fill="none" stroke="#e83a50" stroke-width="1.4" stroke-linejoin="round" stroke-linecap="round" opacity="0.85"/>
<polyline points="801.7,694.0 713.3,745.0" fill="none" stroke="#bc1a3e" stroke-width="6" stroke-linejoin="round" stroke-linecap="butt"/>
<polyline points="801.4,692.9 713.0,743.9" fill="none" stroke="#e04060" stroke-width="1.2" stroke-linejoin="round" stroke-linecap="butt" opacity="0.85"/>
<polyline points="722.0,742.0 722.0,755.0" fill="none" stroke="#bc1a3e" stroke-width="5" />
<polygon points="716.5,754.4 720.9,751.8 727.5,754.8 727.5,757.6 722.5,760.2 716.5,757.4" fill="#bc1a3e" />
<polyline points="745.0,729.0 745.0,742.0" fill="none" stroke="#bc1a3e" stroke-width="5" />
<polygon points="739.5,741.4 743.9,738.8 750.5,741.8 750.5,744.6 745.5,747.2 739.5,744.4" fill="#bc1a3e" />
<polyline points="768.0,716.0 768.0,729.0" fill="none" stroke="#bc1a3e" stroke-width="5" />
<polygon points="762.5,728.4 766.9,725.8 773.5,728.8 773.5,731.6 768.5,734.2 762.5,731.4" fill="#bc1a3e" />
<polyline points="792.0,702.0 792.0,715.0" fill="none" stroke="#bc1a3e" stroke-width="5" />
<polygon points="786.5,714.4 790.9,711.8 797.5,714.8 797.5,717.6 792.5,720.2 786.5,717.4" fill="#bc1a3e" />
<polyline points="780.0,656.7 870.0,696.0" fill="none" stroke="#bc1a3e" stroke-width="3.4" stroke-linejoin="round" stroke-linecap="butt"/>
<polyline points="800.0,688.0 860.0,655.0" fill="none" stroke="#bc1a3e" stroke-width="3" stroke-linejoin="round" stroke-linecap="butt"/>
<polyline points="830.0,700.0 885.0,668.0" fill="none" stroke="#bc1a3e" stroke-width="3" stroke-linejoin="round" stroke-linecap="butt"/>
<polyline points="830.0,690.0 830.0,706.0" fill="none" stroke="#bc1a3e" stroke-width="4.050000000000001" />
<polygon points="826.2,705.4 830.0,704.0 833.8,705.4 830.0,707.2" fill="#bc1a3e" />
<polyline points="861.0,672.0 861.0,688.0" fill="none" stroke="#bc1a3e" stroke-width="4.050000000000001" />
<polygon points="857.2,687.4 861.0,686.0 864.8,687.4 861.0,689.2" fill="#bc1a3e" />
<polyline points="884.0,640.0 884.0,655.0" fill="none" stroke="#bc1a3e" stroke-width="4.050000000000001" />
<polygon points="880.2,654.4 884.0,653.0 887.8,654.4 884.0,656.2" fill="#bc1a3e" />
<polyline points="910.0,655.0 910.0,668.0" fill="none" stroke="#bc1a3e" stroke-width="4.050000000000001" />
<polygon points="906.2,667.4 910.0,666.0 913.8,667.4 910.0,669.2" fill="#bc1a3e" />
<polyline points="769.0,654.0 826.0,681.0" fill="none" stroke="#bc1a3e" stroke-width="4" stroke-linejoin="round" stroke-linecap="butt"/>
<polyline points="771.0,655.0 771.0,670.0" fill="none" stroke="#bc1a3e" stroke-width="4.32" />
<polygon points="766.8,669.4 771.0,668.0 775.2,669.4 771.0,671.2" fill="#bc1a3e" />
<polyline points="873.3,653.3 910.0,670.0" fill="none" stroke="#d20606" stroke-width="4" stroke-linejoin="round" stroke-linecap="butt"/>
<polyline points="875.0,655.0 875.0,690.0" fill="none" stroke="#d20606" stroke-width="4.050000000000001" />
<polygon points="871.2,689.4 875.0,688.0 878.8,689.4 875.0,691.2" fill="#d20606" />
<polyline points="897.0,665.0 897.0,690.0" fill="none" stroke="#d20606" stroke-width="4.050000000000001" />
<polygon points="893.2,689.4 897.0,688.0 900.8,689.4 897.0,691.2" fill="#d20606" />
<polyline points="908.3,550.0 836.7,590.0" fill="none" stroke="#6254b6" stroke-width="4" stroke-linejoin="round" stroke-linecap="butt"/>
<polyline points="908.1,549.3 836.5,589.3" fill="none" stroke="#7064c6" stroke-width="1" stroke-linejoin="round" stroke-linecap="butt" opacity="0.85"/>
<polyline points="836.7,590.0 760.0,633.5" fill="none" stroke="#6254b6" stroke-width="5" stroke-linejoin="round" stroke-linecap="butt"/>
<polyline points="836.4,589.1 759.7,632.6" fill="none" stroke="#7064c6" stroke-width="1.2" stroke-linejoin="round" stroke-linecap="butt" opacity="0.85"/>
<polyline points="760.0,633.5 700.0,667.5 640.0,702.0" fill="none" stroke="#6254b6" stroke-width="6.2" stroke-linejoin="round" stroke-linecap="butt"/>
<polyline points="759.7,632.4 699.7,666.4 639.7,700.9" fill="none" stroke="#7064c6" stroke-width="1.4" stroke-linejoin="round" stroke-linecap="butt" opacity="0.85"/>
<polyline points="700.0,667.5 640.0,702.0 633.0,706.0 633.0,713.0 770.0,777.0 770.0,783.5 678.3,832.0" fill="none" stroke="#6254b6" stroke-width="7" stroke-linejoin="round" stroke-linecap="round"/>
<polyline points="699.6,666.2 639.6,700.7 632.6,704.7 632.6,711.7 769.6,775.7 769.6,782.2 677.9,830.7" fill="none" stroke="#7064c6" stroke-width="1.6" stroke-linejoin="round" stroke-linecap="round" opacity="0.85"/>
<polyline points="658.0,640.0 658.0,832.0" fill="none" stroke="#6254b6" stroke-width="7" stroke-linejoin="round" stroke-linecap="butt"/>
<polyline points="658.0,640.0 658.0,832.0" fill="none" stroke="#7064c6" stroke-width="1.6" stroke-linejoin="round" stroke-linecap="butt" opacity="0.85"/>
<ellipse cx="658" cy="638.5" rx="5.6" ry="2.6" fill="#8a80dc"/>
<polygon points="636.0,694.0 650.0,687.0 662.0,692.0 662.0,703.0 648.0,710.0 636.0,704.0" fill="#6456b8" />
<polyline points="729.0,652.0 729.0,666.0" fill="none" stroke="#6254b6" stroke-width="5.4" />
<polygon points="724.8,665.4 729.0,664.0 733.2,665.4 729.0,667.2" fill="#6254b6" />
<polyline points="750.0,640.0 750.0,654.0" fill="none" stroke="#6254b6" stroke-width="5.4" />
<polygon points="745.8,653.4 750.0,652.0 754.2,653.4 750.0,655.2" fill="#6254b6" />
<polyline points="862.0,576.0 862.0,590.0" fill="none" stroke="#6254b6" stroke-width="5.4" />
<polygon points="857.8,589.4 862.0,588.0 866.2,589.4 862.0,591.2" fill="#6254b6" />
<polyline points="877.0,568.0 877.0,582.0" fill="none" stroke="#6254b6" stroke-width="5.4" />
<polygon points="872.8,581.4 877.0,580.0 881.2,581.4 877.0,583.2" fill="#6254b6" />
<polygon points="722.0,648.0 733.0,642.0 736.0,648.0 725.0,654.0" fill="#6254b6" />
<polygon points="744.0,636.0 755.0,630.0 758.0,636.0 747.0,642.0" fill="#6254b6" />
<polyline points="813.3,598.3 873.3,628.3" fill="none" stroke="#6254b6" stroke-width="6" stroke-linejoin="round" stroke-linecap="butt"/>
<polyline points="813.0,597.2 873.0,627.2" fill="none" stroke="#7064c6" stroke-width="1.2" stroke-linejoin="round" stroke-linecap="butt" opacity="0.85"/>
<polyline points="790.0,613.3 843.3,640.0" fill="none" stroke="#6254b6" stroke-width="6" stroke-linejoin="round" stroke-linecap="butt"/>
<polyline points="789.7,612.2 843.0,638.9" fill="none" stroke="#7064c6" stroke-width="1.2" stroke-linejoin="round" stroke-linecap="butt" opacity="0.85"/>
<polyline points="826.0,608.0 826.0,621.0" fill="none" stroke="#6254b6" stroke-width="4.050000000000001" />
<polygon points="822.5,620.4 826.0,619.0 829.5,620.4 826.0,622.2" fill="#6254b6" />
<polyline points="842.0,616.0 842.0,629.0" fill="none" stroke="#6254b6" stroke-width="4.050000000000001" />
<polygon points="838.5,628.4 842.0,627.0 845.5,628.4 842.0,630.2" fill="#6254b6" />
<polyline points="803.0,622.0 803.0,635.0" fill="none" stroke="#6254b6" stroke-width="4.050000000000001" />
<polygon points="799.5,634.4 803.0,633.0 806.5,634.4 803.0,636.2" fill="#6254b6" />
<polyline points="818.0,630.0 818.0,643.0" fill="none" stroke="#6254b6" stroke-width="4.050000000000001" />
<polygon points="814.5,642.4 818.0,641.0 821.5,642.4 818.0,644.2" fill="#6254b6" />
<polyline points="870.0,628.3 933.3,648.3" fill="none" stroke="#8078d0" stroke-width="3" stroke-linejoin="round" stroke-linecap="butt"/>
<polyline points="848.0,642.0 905.0,662.0" fill="none" stroke="#8078d0" stroke-width="3" stroke-linejoin="round" stroke-linecap="butt"/>
<polyline points="878.0,668.0 878.0,682.0" fill="none" stroke="#8078d0" stroke-width="3.5100000000000002" />
<polygon points="874.2,681.4 878.0,680.0 881.8,681.4 878.0,683.2" fill="#8078d0" />
<polyline points="913.0,640.0 913.0,652.0" fill="none" stroke="#8078d0" stroke-width="3.5100000000000002" />
<polygon points="909.2,651.4 913.0,650.0 916.8,651.4 913.0,653.2" fill="#8078d0" />
<polyline points="762.0,560.0 780.0,566.7 870.0,611.7" fill="none" stroke="#1111d0" stroke-width="2.4" stroke-linejoin="round" stroke-linecap="butt"/>
<polyline points="881.7,615.0 740.0,693.3 727.0,704.0 703.3,721.7 676.7,743.3" fill="none" stroke="#1111d0" stroke-width="7.5" stroke-linejoin="round" stroke-linecap="round"/>
<polyline points="881.3,613.6 739.6,691.9 726.6,702.6 702.9,720.4 676.3,741.9" fill="none" stroke="#2222e6" stroke-width="1.5" stroke-linejoin="round" stroke-linecap="round" opacity="0.85"/>
<polyline points="881.7,615.0 896.7,616.7 940.0,640.0 940.0,652.0" fill="none" stroke="#1111d0" stroke-width="7" stroke-linejoin="round" stroke-linecap="round"/>
<polyline points="881.3,613.7 896.3,615.4 939.6,638.7 939.6,650.7" fill="none" stroke="#2222e6" stroke-width="1.4" stroke-linejoin="round" stroke-linecap="round" opacity="0.85"/>
<polyline points="671.5,645.0 671.5,742.0" fill="none" stroke="#1111d0" stroke-width="7" stroke-linejoin="round" stroke-linecap="butt"/>
<polyline points="671.5,645.0 671.5,742.0" fill="none" stroke="#2222e6" stroke-width="1.5" stroke-linejoin="round" stroke-linecap="butt" opacity="0.85"/>
<polygon points="665.5,642.5 677.5,642.5 674.5,648 668.5,648" fill="#2020f0"/>
<polyline points="671.5,738.0 676.7,745.0 684.0,740.0" fill="none" stroke="#1111d0" stroke-width="7" stroke-linejoin="round" stroke-linecap="round"/>
<polyline points="850.0,656.7 896.7,630.0" fill="none" stroke="#1111d0" stroke-width="3.4" stroke-linejoin="round" stroke-linecap="butt"/>
<polyline points="850.0,656.7 873.3,668.3 881.0,672.5" fill="none" stroke="#1111d0" stroke-width="3.4" stroke-linejoin="round" stroke-linecap="butt"/>
<polyline points="871.5,650.0 871.5,696.0" fill="none" stroke="#1111d0" stroke-width="3" stroke-linejoin="round" stroke-linecap="butt"/>
<polyline points="872.5,690.0 872.5,756.0" fill="none" stroke="#1111d0" stroke-width="4" stroke-linejoin="round" stroke-linecap="butt"/>
<polyline points="880.0,748.3 925.0,723.3 973.3,746.7 1060.0,695.0 1016.7,675.0 1016.7,691.7" fill="none" stroke="#1111d0" stroke-width="4.2" stroke-linejoin="round" stroke-linecap="butt"/>
<polyline points="880.0,748.3 872.5,752.0" fill="none" stroke="#1111d0" stroke-width="4.2" stroke-linejoin="round" stroke-linecap="butt"/>
<polyline points="998.3,733.0 998.3,746.0" fill="none" stroke="#1111d0" stroke-width="4.050000000000001" />
<polygon points="995.0,745.4 998.3,744.0 1001.5,745.4 998.3,747.2" fill="#1111d0" />
<polyline points="1022.5,719.0 1022.5,732.0" fill="none" stroke="#1111d0" stroke-width="4.050000000000001" />
<polygon points="1019.2,731.4 1022.5,730.0 1025.8,731.4 1022.5,733.2" fill="#1111d0" />
<polyline points="1050.0,702.0 1050.0,715.0" fill="none" stroke="#1111d0" stroke-width="4.050000000000001" />
<polygon points="1046.8,714.4 1050.0,713.0 1053.2,714.4 1050.0,716.2" fill="#1111d0" />
<polyline points="1016.7,676.0 1016.7,692.0" fill="none" stroke="#1111d0" stroke-width="4.050000000000001" />
<polygon points="1013.5,691.4 1016.7,690.0 1020.0,691.4 1016.7,693.2" fill="#1111d0" />
<polyline points="1013.3,673.3 1040.0,683.3" fill="none" stroke="#1111d0" stroke-width="3" stroke-linejoin="round" stroke-linecap="butt"/>
<polygon points="866,608 874,604 878,610 870,614" fill="#1414dc"/>
<polyline points="404.0,763.4 439.1,780.8" fill="none" stroke="#10c020" stroke-width="1.1" />
<polyline points="446.3,776.4 446.3,686.0" fill="none" stroke="#1a1ad0" stroke-width="1.1" />
<path d="M446.3 685.8 L441.4 709 M446.3 685.8 L451.9 709 M446.3 685.8 L444 711 M446.3 685.8 L449 711 M441.4 709 Q446.5 713.5 451.9 709 Q446.5 705.5 441.4 709" stroke="#1a1ad0" stroke-width="1" fill="none"/>
<polyline points="452.5,779.7 511.8,745.5" fill="none" stroke="#e01010" stroke-width="1.1" />
<path d="M511.8 745.5 L490.5 752 M511.8 745.5 L497.5 762.5 M511.8 745.5 L492 756 M511.8 745.5 L495 760 M490.5 752 Q497 755 497.5 762.5 Q491 759 490.5 752" stroke="#e01010" stroke-width="1" fill="none"/>
<polygon points="433.1,784.2 446.3,776.4 459.9,783.1 446.3,791.4" fill="#000" stroke="#e8e8e8" stroke-width="1"/>
<text x="441.8" y="671.3" font-family="Liberation Sans, sans-serif" font-size="14.6" fill="#d8d8d8" textLength="9.6" lengthAdjust="spacingAndGlyphs">Z</text>
<text x="519.6" y="744.6" font-family="Liberation Sans, sans-serif" font-size="15.2" fill="#d8d8d8" textLength="9.8" lengthAdjust="spacingAndGlyphs">X</text>
<ellipse cx="1404.5" cy="148.8" rx="71.3" ry="76.8" fill="none" stroke="#6c6c6c" stroke-width="0.9"/>
<ellipse cx="1404.5" cy="148.8" rx="35.2" ry="38.3" fill="none" stroke="#6c6c6c" stroke-width="0.9"/>
<polyline points="1333.2,148.8 1475.8,148.8" fill="none" stroke="#6c6c6c" stroke-width="0.9" />
<polyline points="1404.5,72.0 1404.5,225.6" fill="none" stroke="#6c6c6c" stroke-width="0.9" />
<ellipse cx="1386.6" cy="167.6" rx="5.3" ry="5.8" fill="#8d6443"/>
<rect x="409.7" y="61.7" width="18.600000000000023" height="13.299999999999997" rx="6.649999999999999" fill="#272727"/>
<rect x="431.7" y="61.7" width="102.50000000000006" height="13.299999999999997" rx="6.649999999999999" fill="#272727"/>
<rect x="538" y="61.7" width="48.700000000000045" height="13.299999999999997" rx="6.649999999999999" fill="#272727"/>
<text x="416.6" y="71.8" font-family="Liberation Sans, sans-serif" font-size="9" fill="#808080">+</text>
<text x="438.3" y="71.6" font-family="Liberation Sans, sans-serif" font-size="10" fill="#7c7c7c" textLength="89.2" lengthAdjust="spacingAndGlyphs">Пользовательский вид</text>
<text x="544.7" y="71.6" font-family="Liberation Sans, sans-serif" font-size="10" fill="#7c7c7c" textLength="34.3" lengthAdjust="spacingAndGlyphs">Быстрый</text>
<!--MORE4--></svg>
<div style="left:403px;top:832px;width:1087px;height:19.5px;background:#d6d6d6;"></div>
<div style="left:430.8px;top:833px;width:44px;height:15.5px;background:#e6e6e6;"></div>
<div style="left:475.3px;top:833px;width:32.2px;height:15.5px;background:#d0d0d0;border-right:1px solid #dadada;box-sizing:border-box"></div>
<div style="left:508.7px;top:833px;width:32.6px;height:15.5px;background:#d0d0d0;border-right:1px solid #dadada;box-sizing:border-box"></div>
<span style="left:437.20px;top:835.31px;font-size:10.5px;color:#1a1a1a;transform:scaleX(0.8040);">Модель</span>
<span style="left:480.00px;top:835.31px;font-size:10.5px;color:#1a1a1a;transform:scaleX(0.7748);">Лист1</span>
<span style="left:514.20px;top:835.31px;font-size:10.5px;color:#1a1a1a;transform:scaleX(0.7852);">Лист2</span>
<div style="left:1492.5px;top:42.5px;width:18.5px;height:87px;background:#ececec;border:1px solid #f8f8f8;border-right:none;box-sizing:border-box;"></div>
<span style="left:1506.81px;top:48.70px;font-size:10.5px;color:#333;font-weight:bold;transform:rotate(90deg) scaleX(0.9200);">BIM Свойства</span>
<svg style="position:absolute;left:0;top:0" width="1560" height="60" viewBox="0 0 1560 60"><defs><linearGradient id="lg" x1="0" y1="0" x2="0" y2="1"><stop offset="0" stop-color="#35d8f2"/><stop offset="1" stop-color="#3a97e0"/></linearGradient><linearGradient id="sv" x1="0" y1="0" x2="0" y2="1"><stop offset="0" stop-color="#7db4dc"/><stop offset="1" stop-color="#4d8fc4"/></linearGradient></defs><path d="M55 30.6 L55 14 Q55.5 6.6 63 6.2 L74.6 6 L74.6 20 Q74 29.6 65 30.4 Z" fill="url(#lg)" stroke="#2b86b8" stroke-width="0.8"/><path d="M63.2 30 L63.2 17.5 Q63.4 15.2 65.8 15 L66.4 7" stroke="#2580b0" stroke-width="0.9" fill="none"/><ellipse cx="64.6" cy="18.4" rx="1.8" ry="3.1" fill="#c8f0fb" stroke="#2b86b8" stroke-width="0.6"/><path d="M87.2 6.3 L93 6.3 L96.6 10 L96.6 19.6 L87.2 19.6 Z" fill="#eef7fc" stroke="#6f7b84" stroke-width="0.9"/><path d="M93 6.3 L93 10 L96.6 10" fill="#dfeaf2" stroke="#6f7b84" stroke-width="0.7"/><path d="M103.3 17.6 L103.3 9 L107 9 L108 10.3 L113 10.3 L113 12" fill="#8d9194" stroke="#6a6e71" stroke-width="0.8"/><path d="M103.6 17.8 L106.6 12 L115.8 12 L112.6 17.8 Z" fill="#a9d8f3" stroke="#4d6a80" stroke-width="0.8"/><path d="M121.2 6.2 L131.7 6.2 L133.7 8 L133.7 19.7 L121.2 19.7 Z" fill="url(#sv)" stroke="#3c6e96" stroke-width="0.9"/><rect x="124.0" y="6.6" width="6.6" height="4.6" fill="#eef3f7"/><rect x="128.2" y="7.4" width="1.4" height="2.6" fill="#4b6b85"/><rect x="123.60000000000001" y="13.6" width="7.8" height="6" fill="#e4e4e0" stroke="#8a8a86" stroke-width="0.4"/><path d="M139.3 6.2 L149.8 6.2 L151.8 8 L151.8 19.7 L139.3 19.7 Z" fill="url(#sv)" stroke="#3c6e96" stroke-width="0.9"/><rect x="142.10000000000002" y="6.6" width="6.6" height="4.6" fill="#eef3f7"/><rect x="146.3" y="7.4" width="1.4" height="2.6" fill="#4b6b85"/><rect x="141.70000000000002" y="13.6" width="7.8" height="6" fill="#e4e4e0" stroke="#8a8a86" stroke-width="0.4"/><rect x="140.6" y="11.8" width="7.4" height="7.4" fill="#f2e6a4" stroke="#9a8a40" stroke-width="0.5"/><path d="M142.5 15 L144 16.6 L146.6 13.2" stroke="#9a4a20" stroke-width="1" fill="none"/><path d="M157.6 11.6 L163.6 6.8 L163.6 9.6 Q170.6 9.8 170.6 17.8 Q168.4 13.6 163.6 13.8 L163.6 16.6 Z" fill="#74b2e6" stroke="#3f7fc2" stroke-width="0.8"/><path d="M175.2 10.9 L178.8 10.9 L177 13.1 Z" fill="#6b6b6b"/><path d="M196.8 11.6 L190.8 6.8 L190.8 9.6 Q183.8 9.8 183.8 17.8 Q186 13.6 190.8 13.8 L190.8 16.6 Z" fill="#ffffff" stroke="#ececec" stroke-width="0.8"/><path d="M201.6 10.9 L205.2 10.9 L203.4 13.1 Z" fill="#8b8b8b"/><rect x="212.6" y="7.2" width="8" height="5" fill="#f4f7f9" stroke="#7a858d" stroke-width="0.7"/><rect x="210.2" y="11.6" width="12.8" height="6" rx="1" fill="#a8cbe2" stroke="#5c7d94" stroke-width="0.8"/><rect x="212.4" y="15.8" width="8.4" height="3.8" fill="#eef2f4" stroke="#7a858d" stroke-width="0.6"/><rect x="211.4" y="13" width="2" height="1" fill="#6ab04a"/><path d="M239.3 11.8 L243 11.8" stroke="#555" stroke-width="1"/><path d="M239.2 13.8 L243.1 13.8 L241.1 16.4 Z" fill="#555"/><rect x="1350.8" y="0" width="57.2" height="21" fill="#d4d4d4"/><rect x="1355.3" y="2" width="16" height="16.4" fill="#e4e4e4" stroke="#bdbdbd" stroke-width="0.8"/><rect x="1357" y="4.4" width="12.4" height="11.6" fill="#f4f4f4" stroke="#555" stroke-width="0.9"/><rect x="1357" y="4.4" width="12.4" height="3" fill="#3f7be0"/><path d="M1361 7.4 L1361 16 M1357 9.4 L1369.4 9.4" stroke="#555" stroke-width="0.8"/><rect x="1356.6" y="2.8" width="3" height="1.8" fill="#3f7be0"/><text x="1377.6" y="14.2" font-family="Liberation Sans, sans-serif" font-size="11.5" fill="#444">?</text><path d="M1390.6 7.8 L1395 7.8 L1392.8 10.6 Z" fill="#f4f4f4"/><path d="M1420.3 9.8 L1428 9.8" stroke="#222" stroke-width="1"/><rect x="1454.3" y="7" width="6" height="6.4" fill="none" stroke="#222" stroke-width="0.9" rx="0.8"/><path d="M1456 7 L1456 5.2 L1462 5.2 L1462 11.6 L1460.4 11.6" fill="none" stroke="#222" stroke-width="0.9"/><path d="M1488.4 5.4 L1496.6 13.8 M1496.6 5.4 L1488.4 13.8" stroke="#222" stroke-width="1"/><path d="M376.8 44.2 L380 44.2 M377.4 44.2 L377.4 48.8 L379.6 48.8 L379.6 44.2 M376.4 48.8 L380.6 48.8 M378.5 48.8 L378.5 51.4" stroke="#555" stroke-width="0.8" fill="none"/><path d="M387.6 44 L394 50.4 M394 44 L387.6 50.4" stroke="#555" stroke-width="0.9"/><path d="M568.2 45.8 L573.8 51.4 M573.8 45.8 L568.2 51.4" stroke="#444" stroke-width="0.9"/><path d="M1478.4 45.8 L1485.6 45.8 L1482 49.8 Z" fill="#7a7a7a"/></svg><svg style="position:absolute;left:404px;top:834px" width="16" height="16" viewBox="404 834 16 16"><rect x="405.4" y="836" width="11.4" height="11.4" fill="#f4f6f8" stroke="#9aa2a8" stroke-width="0.8"/><rect x="405.8" y="838" width="10.6" height="2.6" fill="#3f86e0"/><path d="M405.8 843.2 L416.4 843.2" stroke="#9aa2a8" stroke-width="0.8"/></svg>
</body></html>
